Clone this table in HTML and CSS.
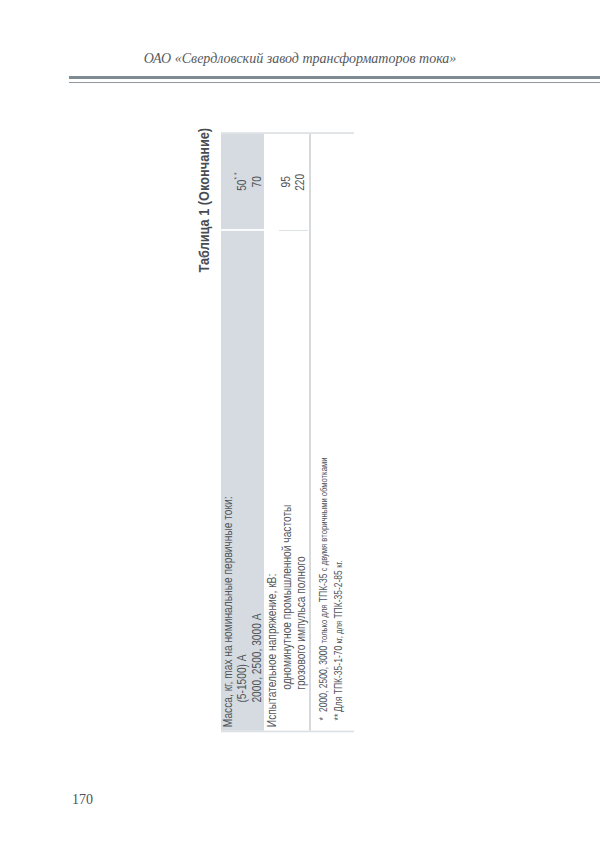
FILE: index.html
```html
<!DOCTYPE html>
<html lang="ru">
<head>
<meta charset="utf-8">
<title>Таблица 1 (Окончание)</title>
<link rel="stylesheet" href="styles.css">
</head>
<body>
<div class="page">
  <header class="running">ОАО «Свердловский завод трансформаторов тока»</header>
  <div class="rule"></div>
  <section class="sheet">
    <h2 class="caption">Таблица 1 (Окончание)</h2>
    <div class="box">
      <div class="table">
        <div class="row row-shaded">
          <div class="label">
            <div class="line">Масса, кг, max на номинальные первичные токи:</div>
            <div class="line ind1">(5-1500) А</div>
            <div class="line ind1">2000, 2500, 3000 А</div>
          </div>
          <div class="value value-shaded">
            <div class="line">&nbsp;</div>
            <div class="line">50<sup>* *</sup></div>
            <div class="line">70</div>
          </div>
        </div>
        <div class="row row-plain">
          <div class="label">
            <div class="line">Испытательное напряжение, кВ:</div>
            <div class="line ind2">одноминутное промышленной частоты</div>
            <div class="line ind2">грозового импульса полного</div>
          </div>
          <div class="value">
            <div class="line">&nbsp;</div>
            <div class="value-body">
              <div class="line">95</div>
              <div class="line">220</div>
            </div>
          </div>
        </div>
      </div>
      <div class="notes">
        <p class="note"><span class="mark">*</span>2000, 2500, 3000 <span class="small">только для</span> ТПК-35 <span class="small">с двумя вторичными обмотками</span></p>
        <p class="note"><span class="mark">**</span>Для ТПК-35-1-70 <span class="small">кг, для</span> ТПК-35-2-85 <span class="small">кг.</span></p>
      </div>
    </div>
  </section>
  <div class="folio">170</div>
</div>
</body>
</html>
```
FILE: styles.css
```css
body {
  margin: 0;
  background: #ffffff;
}

.page {
  width: 600px;
  height: 868px;
  overflow: hidden;
  font-family: "Liberation Sans", Arial, sans-serif;
  color: #4f5459;
}

.running {
  margin: 0;
  padding-top: 48px;
  font-family: "Liberation Serif", "Times New Roman", serif;
  font-style: italic;
  font-weight: normal;
  font-size: 14px;
  line-height: 22px;
  text-align: center;
  color: #56595d;
}

.rule {
  margin: 6px 0 0 69px;
  height: 3px;
  border-top: 3px solid #7f8b93;
  border-bottom: 1px solid #8f999f;
}

/* rotated table: text runs bottom-to-top, glyphs condensed along the reading axis */
.sheet {
  writing-mode: vertical-rl;
  transform: rotate(180deg) scaleY(0.85);
  width: 160px;
  height: 710.6px;
  margin: -8.3px 0 0 196px;
}

.caption {
  margin: 0;
  margin-block-end: 9px;
  font-size: 15px;
  line-height: 16px;
  font-weight: bold;
  text-align: end;
  color: #474c51;
}

.box {
  margin-inline-end: 4.7px;
  border-inline-start: 2px solid #dde1e4;
  border-inline-end: 2px solid #dde1e4;
}

.table {
  border-block-end: 2px solid #d6dadd;
}

.row {
  display: grid;
  grid-template-columns: 1fr 114px;
}

.row-shaded {
  background: #d5dbe0;
}

.line {
  font-size: 12px;
  line-height: 14.4px;
  white-space: nowrap;
}

.row-plain .label {
  padding-block-start: 1px;
}

.row-plain .line {
  line-height: 14.6px;
}

.label {
  padding-inline-start: 4px;
}

.ind1 {
  padding-inline-start: 29px;
}

.ind2 {
  padding-inline-start: 44px;
}

.value {
  text-align: center;
}

.value-shaded {
  border-inline-start: 2px solid #ffffff;
}

.value-body {
  border-inline-start: 1px solid #d8dcdf;
}

sup {
  font-size: 8px;
  line-height: 0;
}

.notes {
  padding-block-start: 6px;
  padding-block-end: 8px;
  padding-inline-start: 12px;
}

.note {
  margin: 0;
  font-size: 10px;
  line-height: 14.5px;
  white-space: nowrap;
}

.small {
  font-size: 9px;
}

.mark {
  display: inline-block;
  inline-size: 10px;
}

.folio {
  margin: 6.7px 0 0 72px;
  font-family: "Liberation Serif", "Times New Roman", serif;
  font-size: 14px;
  line-height: 16px;
  color: #4f5357;
}
```
